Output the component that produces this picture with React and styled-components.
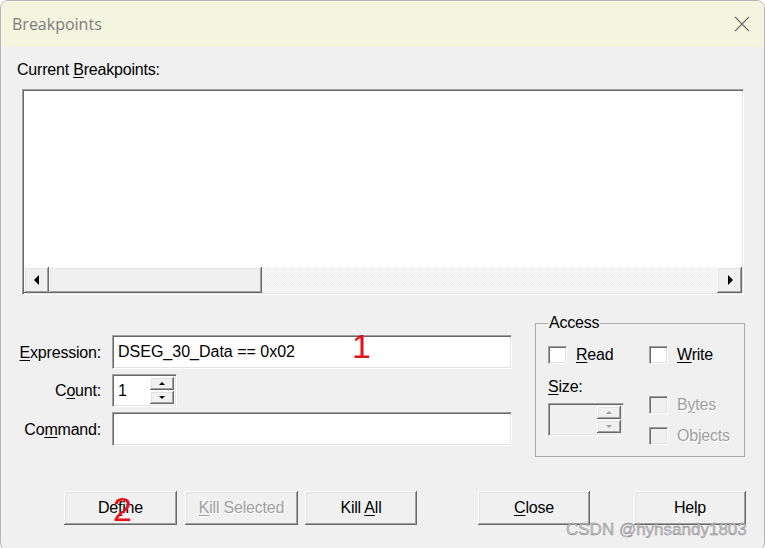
import React from 'react'
import styled, { createGlobalStyle } from 'styled-components'

const GlobalStyle = createGlobalStyle`
  html, body {
    margin: 0;
    padding: 0;
    background: #ffffff;
    overflow: hidden;
  }
`

const Window = styled.div`
  position: relative;
  width: 765px;
  height: 551px;
  box-sizing: border-box;
  border: 1px solid #b5b5b5;
  border-radius: 8px;
  overflow: hidden;
  background: #f0f0f0;
  display: flex;
  flex-direction: column;
  font-family: "Liberation Sans", Arial, sans-serif;
  font-size: 16px;
  letter-spacing: -0.2px;
  color: #000;
`

const TitleBar = styled.div`
  height: 46px;
  flex-shrink: 0;
  background: #f3f5de;
  display: flex;
  align-items: center;
  justify-content: space-between;
  padding: 0 14px 0 11px;
`

const Title = styled.span`
  font-family: "Open Sans", "Noto Sans", sans-serif;
  font-size: 16px;
  letter-spacing: 0;
  color: #7c7c7c;
`

const Body = styled.div`
  flex: 1;
  padding: 14px 0 0 16px;
`

const Label = styled.div`
  line-height: 18px;
  white-space: nowrap;
`

const U = styled.span`
  text-decoration: underline;
  text-underline-offset: 2px;
`

const ListBox = styled.div`
  margin: 10px 0 0 5px;
  width: 722px;
  height: 206px;
  box-sizing: border-box;
  border: 1px solid;
  border-color: #a0a0a0 #ffffff #ffffff #a0a0a0;
  box-shadow: inset 1px 1px #696969, inset -1px -1px #e3e3e3;
  padding: 1px;
  display: flex;
  flex-direction: column;
`

const ListArea = styled.div`
  flex: 1;
  background: #fff;
`

const HScroll = styled.div`
  height: 26px;
  display: flex;
  background: repeating-conic-gradient(#ffffff 0 25%, #ebebeb 0 50%) 0 0 / 2px 2px;
`

const raised = `
  background: #f0f0f0;
  box-shadow: inset -1px -1px #696969, inset 1px 1px #ffffff,
    inset -2px -2px #a0a0a0, inset 2px 2px #e3e3e3;
`

const ScrollButton = styled.div`
  ${raised}
  width: 25px;
  display: flex;
  align-items: center;
  justify-content: center;
`

const Thumb = styled.div`
  ${raised}
  width: 213px;
`

const Track = styled.div`
  flex: 1;
`

const Lower = styled.div`
  display: flex;
  align-items: flex-start;
  margin-top: 19px;
`

const Form = styled.div`
  width: 495px;
  padding-top: 21px;
  display: grid;
  grid-template-columns: 84px 1fr;
  column-gap: 11px;
  row-gap: 5px;
  align-items: center;
`

const FieldLabel = styled(Label)`
  text-align: right;
  padding-top: 1px;
`

const sunken = `
  box-sizing: border-box;
  border: 1px solid;
  border-color: #a0a0a0 #ffffff #ffffff #a0a0a0;
  box-shadow: inset 1px 1px #696969, inset -1px -1px #e3e3e3;
`

const TextInput = styled.div`
  ${sunken}
  position: relative;
  height: ${p => p.$h}px;
  background: #fff;
  padding: 0 5px;
  display: flex;
  align-items: center;
  font-size: 16px;
  letter-spacing: 0;
`

const Spin = styled.div`
  ${sunken}
  width: ${p => p.$w}px;
  height: 33px;
  padding: 2px;
  display: flex;
  background: ${p => (p.$disabled ? '#f0f0f0' : '#fff')};
`

const SpinText = styled.div`
  flex: 1;
  padding-left: 3px;
  display: flex;
  align-items: center;
  letter-spacing: 0;
`

const SpinButtons = styled.div`
  width: 24px;
  display: flex;
  flex-direction: column;
  gap: 1px;
`

const SpinHalf = styled.div`
  ${raised}
  flex: 1;
  display: flex;
  align-items: center;
  justify-content: center;
`

const Access = styled.fieldset`
  margin: 0 0 0 23px;
  width: 210px;
  box-sizing: border-box;
  min-width: 0;
  border: 1px solid #a9a9a9;
  padding: 0 0 11px 12px;
`

const Legend = styled.legend`
  padding: 0 1px;
  margin: 0;
  line-height: 18px;
`

const AccessGrid = styled.div`
  display: grid;
  grid-template-columns: 101px auto;
  padding-top: 14px;
  row-gap: 14px;
  align-items: start;
`

const Column = styled.div`
  display: flex;
  flex-direction: column;
  align-items: flex-start;
  padding-top: ${p => p.$top || 0}px;
  gap: ${p => p.$gap || 0}px;
`

const CheckItem = styled.label`
  display: flex;
  align-items: center;
  line-height: 18px;
  color: ${p => (p.$disabled ? '#a0a0a0' : '#000')};
  text-shadow: ${p => (p.$disabled ? '1px 1px #ffffff' : 'none')};
`

const CheckBox = styled.span`
  ${sunken}
  width: 19px;
  height: 18px;
  margin-right: 9px;
  background: ${p => (p.$disabled ? '#f0f0f0' : '#fff')};
`

const ButtonRow = styled.div`
  display: flex;
  margin-top: 34px;
  padding-left: 47px;
`

const Button = styled.div`
  ${raised}
  position: relative;
  width: ${p => p.$w}px;
  height: 34px;
  margin-left: ${p => p.$ml || 0}px;
  display: flex;
  align-items: center;
  justify-content: center;
  color: ${p => (p.$disabled ? '#a0a0a0' : '#000')};
  text-shadow: ${p => (p.$disabled ? '1px 1px #ffffff' : 'none')};
`

const ButtonText = styled.span`
  white-space: pre;
`

const Mark = styled.span`
  position: absolute;
  left: ${p => p.$x}px;
  top: ${p => p.$y}px;
  font-family: "Liberation Sans", Arial, sans-serif;
  font-size: 34px;
  line-height: 34px;
  letter-spacing: 0;
  color: #e8101a;
  text-shadow: none;
`

const Watermark = styled.span`
  position: absolute;
  left: 565px;
  top: 519px;
  font-family: "Liberation Sans", Arial, sans-serif;
  font-size: 17px;
  letter-spacing: 0;
  line-height: 20px;
  color: #c4c4c4;
  -webkit-text-stroke: 0.4px #858585;
  white-space: nowrap;
`

const Arrow = ({ dir, color = '#000', size = 8 }) => {
  const pts = {
    left: '6,0 6,10 1,5',
    right: '2,0 2,10 7,5',
    up: '0,4 6,4 3,1',
    down: '0,1 6,1 3,4',
  }[dir]
  const horiz = dir === 'left' || dir === 'right'
  return (
    <svg width={horiz ? size : 6} height={horiz ? size * 1.25 : 5} viewBox={horiz ? '0 0 8 10' : '0 0 6 5'}>
      <polygon points={pts} fill={color} />
    </svg>
  )
}

const CloseIcon = () => (
  <svg width="16" height="16" viewBox="0 0 16 16">
    <path d="M1 1 L15 15 M15 1 L1 15" stroke="#6a6a6a" strokeWidth="1.1" fill="none" />
  </svg>
)

const SpinBox = ({ w, value, disabled }) => (
  <Spin $w={w} $disabled={disabled}>
    <SpinText>{value}</SpinText>
    <SpinButtons>
      <SpinHalf><Arrow dir="up" color={disabled ? '#a0a0a0' : '#000'} /></SpinHalf>
      <SpinHalf><Arrow dir="down" color={disabled ? '#a0a0a0' : '#000'} /></SpinHalf>
    </SpinButtons>
  </Spin>
)

const App = () => {
  return (
    <Window>
      <GlobalStyle />
      <TitleBar>
        <Title>Breakpoints</Title>
        <CloseIcon />
      </TitleBar>
      <Body>
        <Label>Current <U>B</U>reakpoints:</Label>
        <ListBox>
          <ListArea />
          <HScroll>
            <ScrollButton><Arrow dir="left" /></ScrollButton>
            <Thumb />
            <Track />
            <ScrollButton><Arrow dir="right" /></ScrollButton>
          </HScroll>
        </ListBox>
        <Lower>
          <Form>
            <FieldLabel><U>E</U>xpression:</FieldLabel>
            <TextInput $h={34}>
              DSEG_30_Data == 0x02
              <Mark $x={239} $y={-7}>1</Mark>
            </TextInput>
            <FieldLabel>C<U>o</U>unt:</FieldLabel>
            <SpinBox w={65} value="1" />
            <FieldLabel>Co<U>m</U>mand:</FieldLabel>
            <TextInput $h={34} />
          </Form>
          <Access>
            <Legend>Access</Legend>
            <AccessGrid>
              <CheckItem><CheckBox /><span><U>R</U>ead</span></CheckItem>
              <CheckItem><CheckBox /><span><U>W</U>rite</span></CheckItem>
              <Column $gap={7}>
                <Label><U>S</U>ize:</Label>
                <SpinBox w={76} value="" disabled />
              </Column>
              <Column $top={18} $gap={13}>
                <CheckItem $disabled><CheckBox $disabled /><span>B<U>y</U>tes</span></CheckItem>
                <CheckItem $disabled><CheckBox $disabled /><span>Objects</span></CheckItem>
              </Column>
            </AccessGrid>
          </Access>
        </Lower>
        <ButtonRow>
          <Button $w={113}>
            <ButtonText>De<U>f</U>ine</ButtonText>
            <Mark $x={49} $y={1}>2</Mark>
          </Button>
          <Button $w={113} $ml={8} $disabled><ButtonText><U>K</U>ill Selected</ButtonText></Button>
          <Button $w={112} $ml={7}><ButtonText>Kill <U>A</U>ll</ButtonText></Button>
          <Button $w={112} $ml={61}><ButtonText><U>C</U>lose</ButtonText></Button>
          <Button $w={112} $ml={44}><ButtonText>Help</ButtonText></Button>
        </ButtonRow>
      </Body>
      <Watermark>CSDN @hyhsandy1803</Watermark>
    </Window>
  )
}

export default App
